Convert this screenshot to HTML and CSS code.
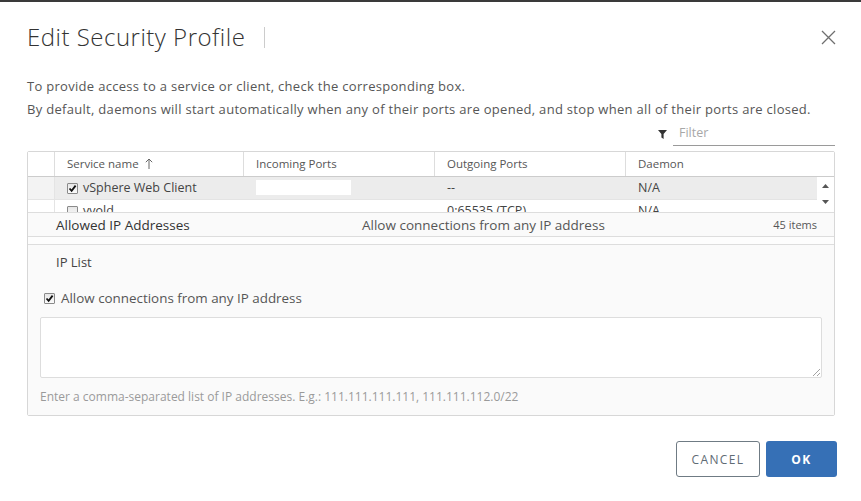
FILE: index.html
```html
<!DOCTYPE html>
<html>
<head>
<meta charset="utf-8">
<link rel="stylesheet" href="styles.css">
</head>
<body>
<div class="dialog">
  <div class="header">
    <h1 class="title">Edit Security Profile</h1>
    <span class="sep"></span>
    <svg class="close" width="15" height="15" viewBox="0 0 15 15"><path d="M1 1L14 14M14 1L1 14" stroke="#6f6f6f" stroke-width="1.3" fill="none"/></svg>
  </div>
  <p class="intro">To provide access to a service or client, check the corresponding box.<br>By default, daemons will start automatically when any of their ports are opened, and stop when all of their ports are closed.</p>
  <div class="filter-row">
    <svg class="funnel" width="9" height="9" viewBox="0 0 9 9"><path d="M0 0H9L5.6 4V9L3.4 7.6V4Z" fill="#333"/></svg>
    <div class="filter">Filter</div>
  </div>
  <div class="grid">
    <div class="grid-head">
      <div class="c0"></div>
      <div class="c1">Service name <svg class="arrow" width="8" height="11" viewBox="0 0 8 11"><path d="M4 11V1M0.8 4.2L4 1L7.2 4.2" stroke="#666" stroke-width="1" fill="none"/></svg></div>
      <div class="c2">Incoming Ports</div>
      <div class="c3">Outgoing Ports</div>
      <div class="c4">Daemon</div>
    </div>
    <div class="grid-body">
      <div class="rows">
        <div class="row sel">
          <div class="c0"></div>
          <div class="c1"><span class="cb on"><svg width="9" height="9" viewBox="0 0 9 9"><path d="M1.5 4.5L3.6 6.8L7.6 1.6" stroke="#111" stroke-width="1.8" fill="none"/></svg></span>vSphere Web Client</div>
          <div class="c2"><span class="redact"></span></div>
          <div class="c3">--</div>
          <div class="c4">N/A</div>
        </div>
        <div class="row">
          <div class="c0"></div>
          <div class="c1"><span class="cb"></span>vvold</div>
          <div class="c2"></div>
          <div class="c3">0:65535 (TCP)</div>
          <div class="c4">N/A</div>
        </div>
      </div>
      <div class="scroll">
        <svg width="7" height="4" viewBox="0 0 7 4"><path d="M0 4L3.5 0L7 4Z" fill="#555"/></svg>
        <svg width="7" height="4" viewBox="0 0 7 4"><path d="M0 0L3.5 4L7 0Z" fill="#555"/></svg>
      </div>
    </div>
    <div class="grid-foot">
      <span class="f-label">Allowed IP Addresses</span>
      <span class="f-value">Allow connections from any IP address</span>
      <span class="f-count">45 items</span>
    </div>
    <div class="spacer"></div>
    <div class="detail">
      <div class="ip-title">IP List</div>
      <label class="check-line"><span class="cb on"><svg width="9" height="9" viewBox="0 0 9 9"><path d="M1.5 4.5L3.6 6.8L7.6 1.6" stroke="#111" stroke-width="1.8" fill="none"/></svg></span>Allow connections from any IP address</label>
      <div class="textarea">
        <svg class="grip" width="8" height="8" viewBox="0 0 8 8"><path d="M8 1L1 8M8 5L5 8" stroke="#999" stroke-width="0.9"/></svg>
      </div>
      <div class="hint">Enter a comma-separated list of IP addresses. E.g.: 111.111.111.111, 111.111.112.0/22</div>
    </div>
  </div>
  <div class="buttons">
    <button class="btn cancel">CANCEL</button>
    <button class="btn ok">OK</button>
  </div>
</div>
</body>
</html>
```
FILE: styles.css
```css
html, body {
  margin: 0;
  padding: 0;
  background: #fff;
  width: 861px;
  height: 501px;
  overflow: hidden;
  font-family: "Open Sans", "Noto Sans", sans-serif;
  color: #565656;
}
.dialog {
  border-top: 2px solid #3a3a3a;
  padding: 0 26px 0 27px;
  height: 499px;
  box-sizing: border-box;
}
.header {
  display: flex;
  align-items: center;
  padding-top: 21px;
  height: 28px;
}
.title {
  margin: 0;
  font-size: 24px;
  font-weight: 300;
  line-height: 28px;
  color: #333;
  letter-spacing: 0.5px;
}
.sep {
  width: 1px;
  height: 21px;
  background: #ccc;
  margin-left: 19px;
}
.close {
  margin-left: auto;
  margin-right: -1px;
}
.intro {
  margin: 24px 0 0;
  font-size: 13px;
  letter-spacing: 0.3px;
  line-height: 23px;
  color: #565656;
}
.filter-row {
  display: flex;
  justify-content: flex-end;
  align-items: center;
  height: 25px;
}
.funnel {
  margin-right: 6px;
  margin-top: 1px;
}
.filter {
  width: 156px;
  padding-left: 6px;
  height: 24px;
  line-height: 24px;
  border-bottom: 1px solid #9a9a9a;
  font-size: 12.5px;
  color: #a8a8a8;
}
.grid {
  margin-top: 5px;
  border: 1px solid #d7d7d7;
  border-radius: 2px;
  height: 265px;
  box-sizing: border-box;
  display: flex;
  flex-direction: column;
}
.grid-head, .row {
  display: flex;
}
.grid-head {
  height: 24px;
  border-bottom: 1px solid #ccc;
  font-size: 11.5px;
  color: #565656;
  background: #fff;
}
.grid-head > div {
  line-height: 24px;
  border-right: 1px solid #ddd;
  box-sizing: border-box;
  padding-left: 12px;
}
.grid-head .c4 { border-right: 0; flex: 1; }
.c0 { width: 27px; padding: 0 !important; flex: none; }
.c1 { width: 189px; flex: none; }
.c2 { width: 191px; flex: none; }
.c3 { width: 191px; flex: none; }
.c4 { flex: 1; }
.arrow {
  vertical-align: -1px;
  margin-left: 3px;
}
.grid-body {
  display: flex;
  height: 36px;
  overflow: hidden;
}
.rows {
  flex: 1;
}
.row {
  height: 22px;
  font-size: 12.5px;
  color: #444;
  border-bottom: 1px solid #e4e4e4;
}
.row > div {
  line-height: 22px;
  box-sizing: border-box;
  padding-left: 12px;
  display: flex;
  align-items: center;
}
.row .c0 { border-right: 1px solid #e4e4e4; }
.row.sel { background: #ececec; }
.row.sel .c0 { background: #f3f3f3; }
.redact {
  display: block;
  width: 95px;
  height: 15px;
  background: #fff;
  margin-top: -1px;
}
.cb {
  display: inline-flex;
  align-items: center;
  justify-content: center;
  width: 11px;
  height: 11px;
  box-sizing: border-box;
  border: 1px solid #8a8a8a;
  background: linear-gradient(#e6e6e6, #fbfbfb);
  border-radius: 1px;
  margin-right: 5px;
  flex: none;
}
.scroll {
  width: 17px;
  flex: none;
  background: #fff;
  display: flex;
  flex-direction: column;
  align-items: center;
  padding-top: 7px;
  gap: 12px;
  box-sizing: border-box;
}
.grid-foot {
  display: flex;
  align-items: center;
  height: 23px;
  border-top: 1px solid #ddd;
  border-bottom: 1px solid #ddd;
  background: #fafafa;
  font-size: 13.5px;
  margin-top: -1px;
  position: relative;
  z-index: 1;
}
.f-label {
  padding-left: 28px;
  width: 306px;
  color: #333;
}
.f-value { color: #565656; }
.f-count {
  margin-left: auto;
  margin-right: 17px;
  font-size: 11px;
  color: #565656;
}
.spacer {
  height: 7px;
  border-bottom: 1px solid #ddd;
  background: #fdfdfd;
}
.detail {
  flex: 1;
  background: #fafafa;
  padding: 0 12px 0 12px;
  display: flex;
  flex-direction: column;
}
.ip-title {
  margin-top: 8px;
  padding-left: 16px;
  font-size: 13px;
  line-height: 18px;
  color: #444;
}
.check-line {
  display: flex;
  align-items: center;
  margin-top: 18px;
  padding-left: 4px;
  font-size: 13.4px;
  line-height: 18px;
  color: #565656;
}
.check-line .cb { margin-right: 6px; }
.textarea {
  margin-top: 10px;
  height: 61px;
  box-sizing: border-box;
  border: 1px solid #ddd;
  background: #fff;
  border-radius: 2px;
  position: relative;
}
.grip {
  position: absolute;
  right: 1px;
  bottom: 1px;
}
.hint {
  margin-top: 11px;
  font-size: 12px;
  color: #9a9a9a;
  line-height: 16px;
}
.buttons {
  display: flex;
  justify-content: flex-end;
  gap: 6px;
  margin-top: 25px;
  margin-right: -2px;
}
.btn {
  height: 36px;
  border-radius: 3px;
  font-family: "Open Sans", "Noto Sans", sans-serif;
  font-size: 12px;
  letter-spacing: 1.4px;
  cursor: pointer;
}
.cancel {
  width: 84px;
  background: #fff;
  border: 1px solid #6f7b84;
  color: #5f6b74;
}
.ok {
  width: 71px;
  background: #3670b6;
  border: 0;
  color: #fff;
  font-weight: 700;
}
```
